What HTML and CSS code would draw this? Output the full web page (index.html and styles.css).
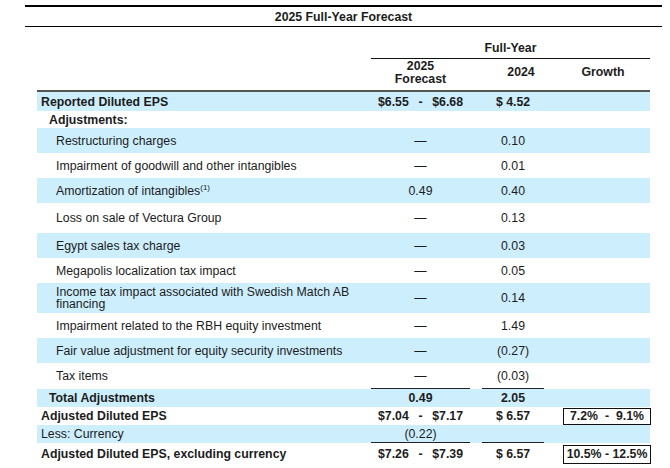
FILE: index.html
```html
<!DOCTYPE html>
<html>
<head>
<meta charset="utf-8">
<link rel="stylesheet" href="styles.css">
</head>
<body>
<div class="page">
  <div class="title">2025 Full-Year Forecast</div>
  <div class="table">
    <div class="hrow1">
      <div></div>
      <div class="fy">Full-Year</div>
    </div>
    <div class="hrow2">
      <div></div>
      <div class="hc">2025<br>Forecast</div>
      <div></div>
      <div class="hc h24">2024</div>
      <div></div>
      <div class="hc">Growth</div>
    </div>

    <div class="row band h19 b">
      <div class="lbl">Reported Diluted EPS</div>
      <div class="num range"><span>$6.55</span><span>-</span><span>$6.68</span></div>
      <div></div>
      <div class="num">$ 4.52</div>
      <div></div><div></div>
    </div>
    <div class="row h17 b">
      <div class="lbl ind1">Adjustments:</div>
      <div></div><div></div><div></div><div></div><div></div>
    </div>
    <div class="row band h25">
      <div class="lbl ind2">Restructuring charges</div>
      <div class="num">—</div><div></div><div class="num">0.10</div><div></div><div></div>
    </div>
    <div class="row h25">
      <div class="lbl ind2">Impairment of goodwill and other intangibles</div>
      <div class="num">—</div><div></div><div class="num">0.01</div><div></div><div></div>
    </div>
    <div class="row band h25">
      <div class="lbl ind2"><span>Amortization of intangibles<sup>(1)</sup></span></div>
      <div class="num">0.49</div><div></div><div class="num">0.40</div><div></div><div></div>
    </div>
    <div class="row h30">
      <div class="lbl ind2">Loss on sale of Vectura Group</div>
      <div class="num">—</div><div></div><div class="num">0.13</div><div></div><div></div>
    </div>
    <div class="row band h25">
      <div class="lbl ind2">Egypt sales tax charge</div>
      <div class="num">—</div><div></div><div class="num">0.03</div><div></div><div></div>
    </div>
    <div class="row h25">
      <div class="lbl ind2">Megapolis localization tax impact</div>
      <div class="num">—</div><div></div><div class="num">0.05</div><div></div><div></div>
    </div>
    <div class="row band h30">
      <div class="lbl ind2 two">Income tax impact associated with Swedish Match AB financing</div>
      <div class="num">—</div><div></div><div class="num">0.14</div><div></div><div></div>
    </div>
    <div class="row h25">
      <div class="lbl ind2">Impairment related to the RBH equity investment</div>
      <div class="num">—</div><div></div><div class="num">1.49</div><div></div><div></div>
    </div>
    <div class="row band h25">
      <div class="lbl ind2">Fair value adjustment for equity security investments</div>
      <div class="num">—</div><div></div><div class="num">(0.27)</div><div></div><div></div>
    </div>
    <div class="row h26">
      <div class="lbl ind2">Tax items</div>
      <div class="num ul">—</div><div></div><div class="num ul">(0.03)</div><div></div><div></div>
    </div>
    <div class="row band h18 b">
      <div class="lbl ind1">Total Adjustments</div>
      <div class="num">0.49</div><div></div><div class="num">2.05</div><div></div><div></div>
    </div>
    <div class="row h18 b">
      <div class="lbl">Adjusted Diluted EPS</div>
      <div class="num range"><span>$7.04</span><span>-</span><span>$7.17</span></div>
      <div></div>
      <div class="num">$ 6.57</div>
      <div></div>
      <div class="gcell"><div class="box range2"><span>7.2%</span><span>-</span><span>9.1%</span></div></div>
    </div>
    <div class="row band h18">
      <div class="lbl">Less: Currency</div>
      <div class="num ul">(0.22)</div><div></div><div class="num ul"></div><div></div><div></div>
    </div>
    <div class="row h22 b">
      <div class="lbl">Adjusted Diluted EPS, excluding currency</div>
      <div class="num range"><span>$7.26</span><span>-</span><span>$7.39</span></div>
      <div></div>
      <div class="num">$ 6.57</div>
      <div></div>
      <div class="gcell"><div class="box box2">10.5% - 12.5%</div></div>
    </div>
  </div>
</div>
</body>
</html>
```

FILE: styles.css
```css
html, body {
  margin: 0;
  padding: 0;
  background: #ffffff;
}
body {
  font-family: "Liberation Sans", Arial, sans-serif;
  font-size: 12.3px;
  color: #1c1c1c;
}
.page {
  padding-top: 5px;
}
.title {
  margin-left: 25px;
  width: 637px;
  border-top: 2px solid #000;
  border-bottom: 1px solid #000;
  height: 19px;
  line-height: 20px;
  text-align: center;
  font-weight: bold;
}
.table {
  margin-left: 37px;
  width: 613px;
}
.hrow1 {
  display: grid;
  grid-template-columns: 334px 279px;
  height: 32px;
}
.fy {
  border-bottom: 1.5px solid #111;
  font-weight: bold;
  text-align: center;
  display: flex;
  align-items: flex-end;
  justify-content: center;
  padding-bottom: 3px;
}
.hrow2, .row {
  display: grid;
  grid-template-columns: 334px 99px 12px 62px 12px 94px;
}
.hrow2 {
  height: 33px;
  border-bottom: 2.5px solid #555;
  box-sizing: border-box;
}
.hc {
  font-weight: bold;
  text-align: center;
  display: flex;
  align-items: center;
  justify-content: center;
  line-height: 13px;
  padding-bottom: 4px;
}
.h24 {
  padding-left: 16px;
}
.row > div {
  display: flex;
  align-items: center;
  box-sizing: border-box;
}
.band {
  background: #cdeefc;
}
.b {
  font-weight: bold;
}
.h17 { height: 17px; }
.h18 { height: 18px; }
.h19 { height: 19px; }
.h22 { height: 22px; }
.h25 { height: 25px; }
.h26 { height: 26px; }
.h30 { height: 30px; }
.lbl {
  padding-left: 4px;
}
.ind1 { padding-left: 12px; }
.ind2 { padding-left: 19px; }
.two {
  line-height: 12px;
  padding-right: 0;
}
sup {
  font-size: 8px;
  line-height: 0;
  vertical-align: 5px;
}
.row > .num {
  justify-content: center;
}
.row > .range {
  justify-content: space-between;
  padding: 0 7px;
}
.ul {
  border-bottom: 1px solid #222;
}
.row > .gcell {
  justify-content: flex-end;
  margin-right: -1px;
}
.box {
  width: 88px;
  height: 17px;
  border: 1px solid #111;
  box-sizing: border-box;
  display: flex;
  align-items: center;
  font-weight: bold;
}
.range2 {
  justify-content: space-between;
  padding: 0 6px;
}
.box2 {
  height: 19px;
  justify-content: center;
}
```
